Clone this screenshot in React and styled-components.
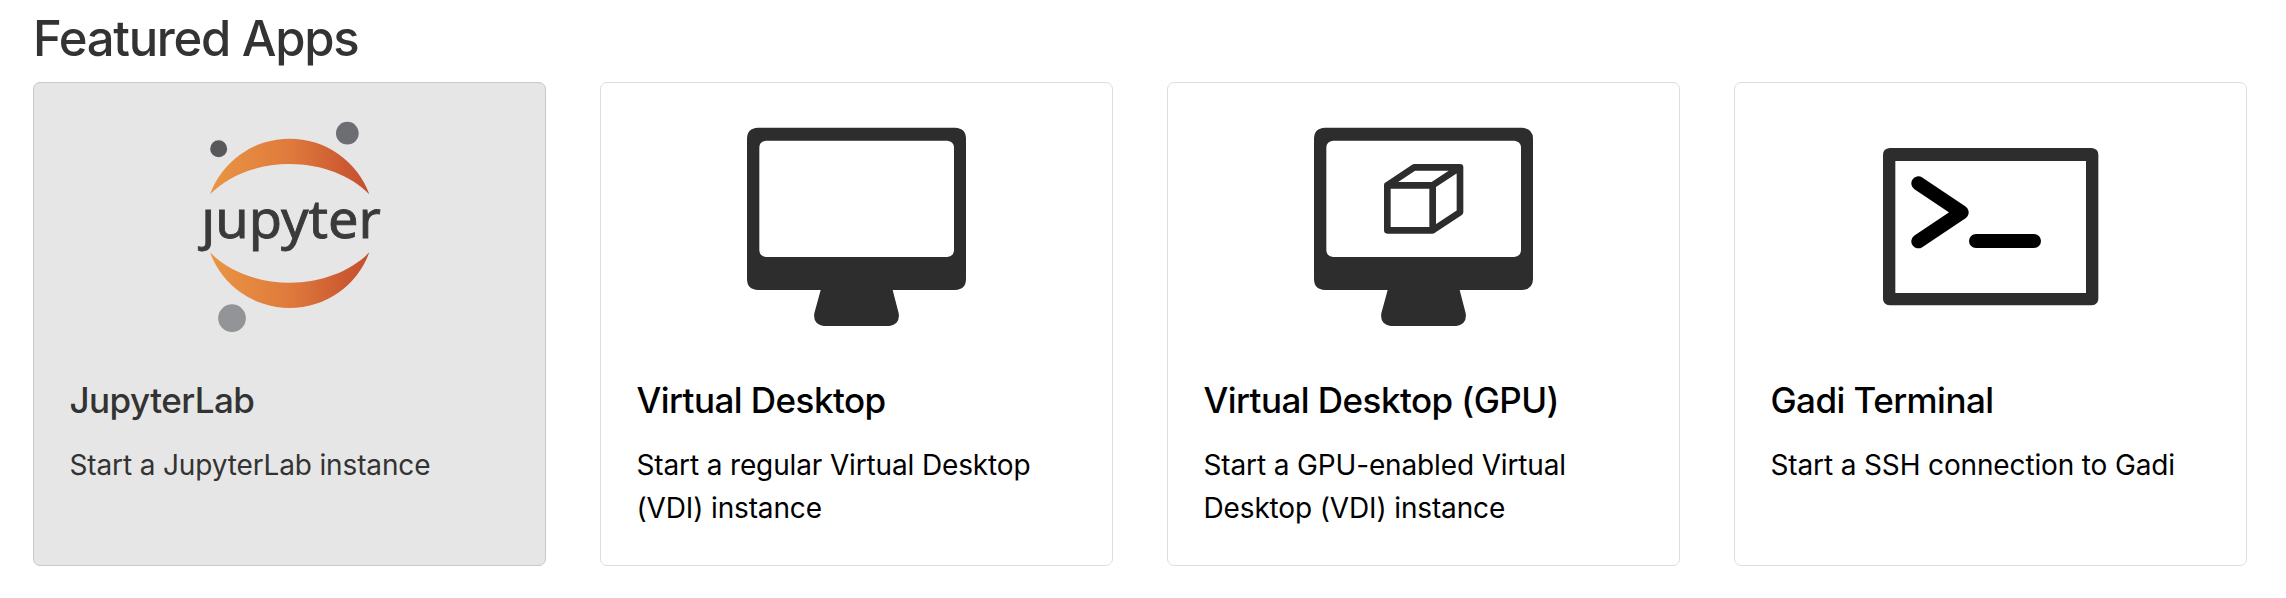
import React from "react";
import styled, { createGlobalStyle } from "styled-components";

const GlobalStyle = createGlobalStyle`
  *, *::before, *::after { box-sizing: border-box; }
  body {
    margin: 0;
    background: #fff;
    font-family: Inter, "Liberation Sans", sans-serif;
    -webkit-font-smoothing: antialiased;
  }
`;

const Page = styled.main`
  padding: 8px 39px 32px 33px;
`;

const Heading = styled.h2`
  margin: 0;
  height: 74px;
  font-size: 49px;
  font-weight: 550;
  line-height: 61px;
  letter-spacing: -1.3px;
  color: #333;
`;

const AppGrid = styled.section`
  display: grid;
  grid-template-columns: repeat(4, 513px);
  column-gap: 54px;
`;

const AppCard = styled.article`
  display: flex;
  flex-direction: column;
  height: 484px;
  padding: 17px 35.5px 0;
  border: 1px solid ${(p) => (p.$active ? "#c8c8c8" : "#dedede")};
  border-radius: 7px;
  background: ${(p) => (p.$active ? "#e6e6e6" : "#fff")};
  color: ${(p) => (p.$active ? "#333" : "#000")};
`;

const Artwork = styled.svg`
  display: block;
  align-self: center;
  width: 219px;
  height: 250px;
  overflow: visible;
`;

const AppName = styled.h3`
  margin: 29px 0 0;
  font-size: 35px;
  font-weight: 550;
  line-height: 42px;
  letter-spacing: -0.55px;
  white-space: nowrap;
`;

const AppText = styled.p`
  margin: 22.5px 0 0;
  font-size: 28px;
  line-height: 43px;
  letter-spacing: -0.14px;
`;

const Wordmark = styled.text`
  font-family: "Noto Sans", "Open Sans", sans-serif;
  font-size: 158px;
  fill: #3a3a3b;
  stroke: #3a3a3b;
  stroke-width: 2.5px;
`;

function JupyterArt() {
  return (
    <Artwork viewBox="0 0 657 750">
      <defs>
        <linearGradient id="ring" gradientUnits="userSpaceOnUse" x1="90" y1="0" x2="568" y2="0">
          <stop offset="0" stopColor="#ea9544" />
          <stop offset="0.5" stopColor="#df7a3c" />
          <stop offset="0.85" stopColor="#cc5a31" />
          <stop offset="1" stopColor="#c44f2e" />
        </linearGradient>
        <clipPath id="undotted">
          <path d="M40 322H110V290H640V480H40Z" />
        </clipPath>
      </defs>
      <g fill="url(#ring)">
        <path d="M90 283A254.5 254.5 0 0 1 568 283C515 228 427 192 329 192C231 192 143 228 90 283Z" />
        <path d="M90 457A254.5 254.5 0 0 0 568 457C515 512 427 548 329 548C231 548 143 512 90 457Z" />
      </g>
      <circle cx="116" cy="146" r="25.5" fill="#58585a" />
      <circle cx="502" cy="99.500" r="34" fill="#6d6e71" />
      <circle cx="156" cy="654.500" r="41.500" fill="#939498" />
      <g clipPath="url(#undotted)">
        <Wordmark x="64" y="413" textLength="539" lengthAdjust="spacingAndGlyphs">jupyter</Wordmark>
      </g>
    </Artwork>
  );
}

function Monitor({ children }) {
  return (
    <Artwork viewBox="42 -30 657 750">
      <path
        fill="#2d2d2d"
        fillRule="evenodd"
        d="M75 53H666Q699 55 699 86V507Q699 538 666 540H479L497 610Q502 642 469 648H272Q239 642 244 610L263 540H75Q42 538 42 507V86Q42 55 75 53ZM99 92Q80 94 79 112V421Q80 439 99 441H643Q662 439 663 421V112Q662 94 643 92Z"
      />
      {children}
    </Artwork>
  );
}

function GpuMonitor() {
  return (
    <Monitor>
      <path
        d="M262 226H398V361H262ZM262 226L343 172H480V307L398 361M398 226L480 172"
        fill="none"
        stroke="#2d2d2d"
        strokeWidth="20"
        strokeLinejoin="round"
      />
    </Monitor>
  );
}

function TerminalArt() {
  return (
    <Artwork viewBox="63 -90 657 750">
      <path
        fill="#2d2d2d"
        fillRule="evenodd"
        d="M89 54H695Q715 56 715 74V506Q715 524 695 526H89Q69 524 69 506V74Q69 56 89 54ZM106 93V489H678V93Z"
      />
      <path
        d="M175 160L305 247L175 334M348 333H522"
        fill="none"
        stroke="#000"
        strokeWidth="42"
        strokeLinecap="round"
        strokeLinejoin="round"
      />
    </Artwork>
  );
}

const apps = [
  { name: "JupyterLab", text: "Start a JupyterLab instance", Art: JupyterArt, active: true },
  { name: "Virtual Desktop", text: "Start a regular Virtual Desktop (VDI) instance", Art: Monitor },
  { name: "Virtual Desktop (GPU)", text: "Start a GPU-enabled Virtual Desktop (VDI) instance", Art: GpuMonitor },
  { name: "Gadi Terminal", text: "Start a SSH connection to Gadi", Art: TerminalArt },
];

export default function App() {
  return (
    <Page>
      <GlobalStyle />
      <Heading>Featured Apps</Heading>
      <AppGrid>
        {apps.map(({ name, text, Art, active }) => (
          <AppCard key={name} $active={active}>
            <Art />
            <AppName>{name}</AppName>
            <AppText>{text}</AppText>
          </AppCard>
        ))}
      </AppGrid>
    </Page>
  );
}
